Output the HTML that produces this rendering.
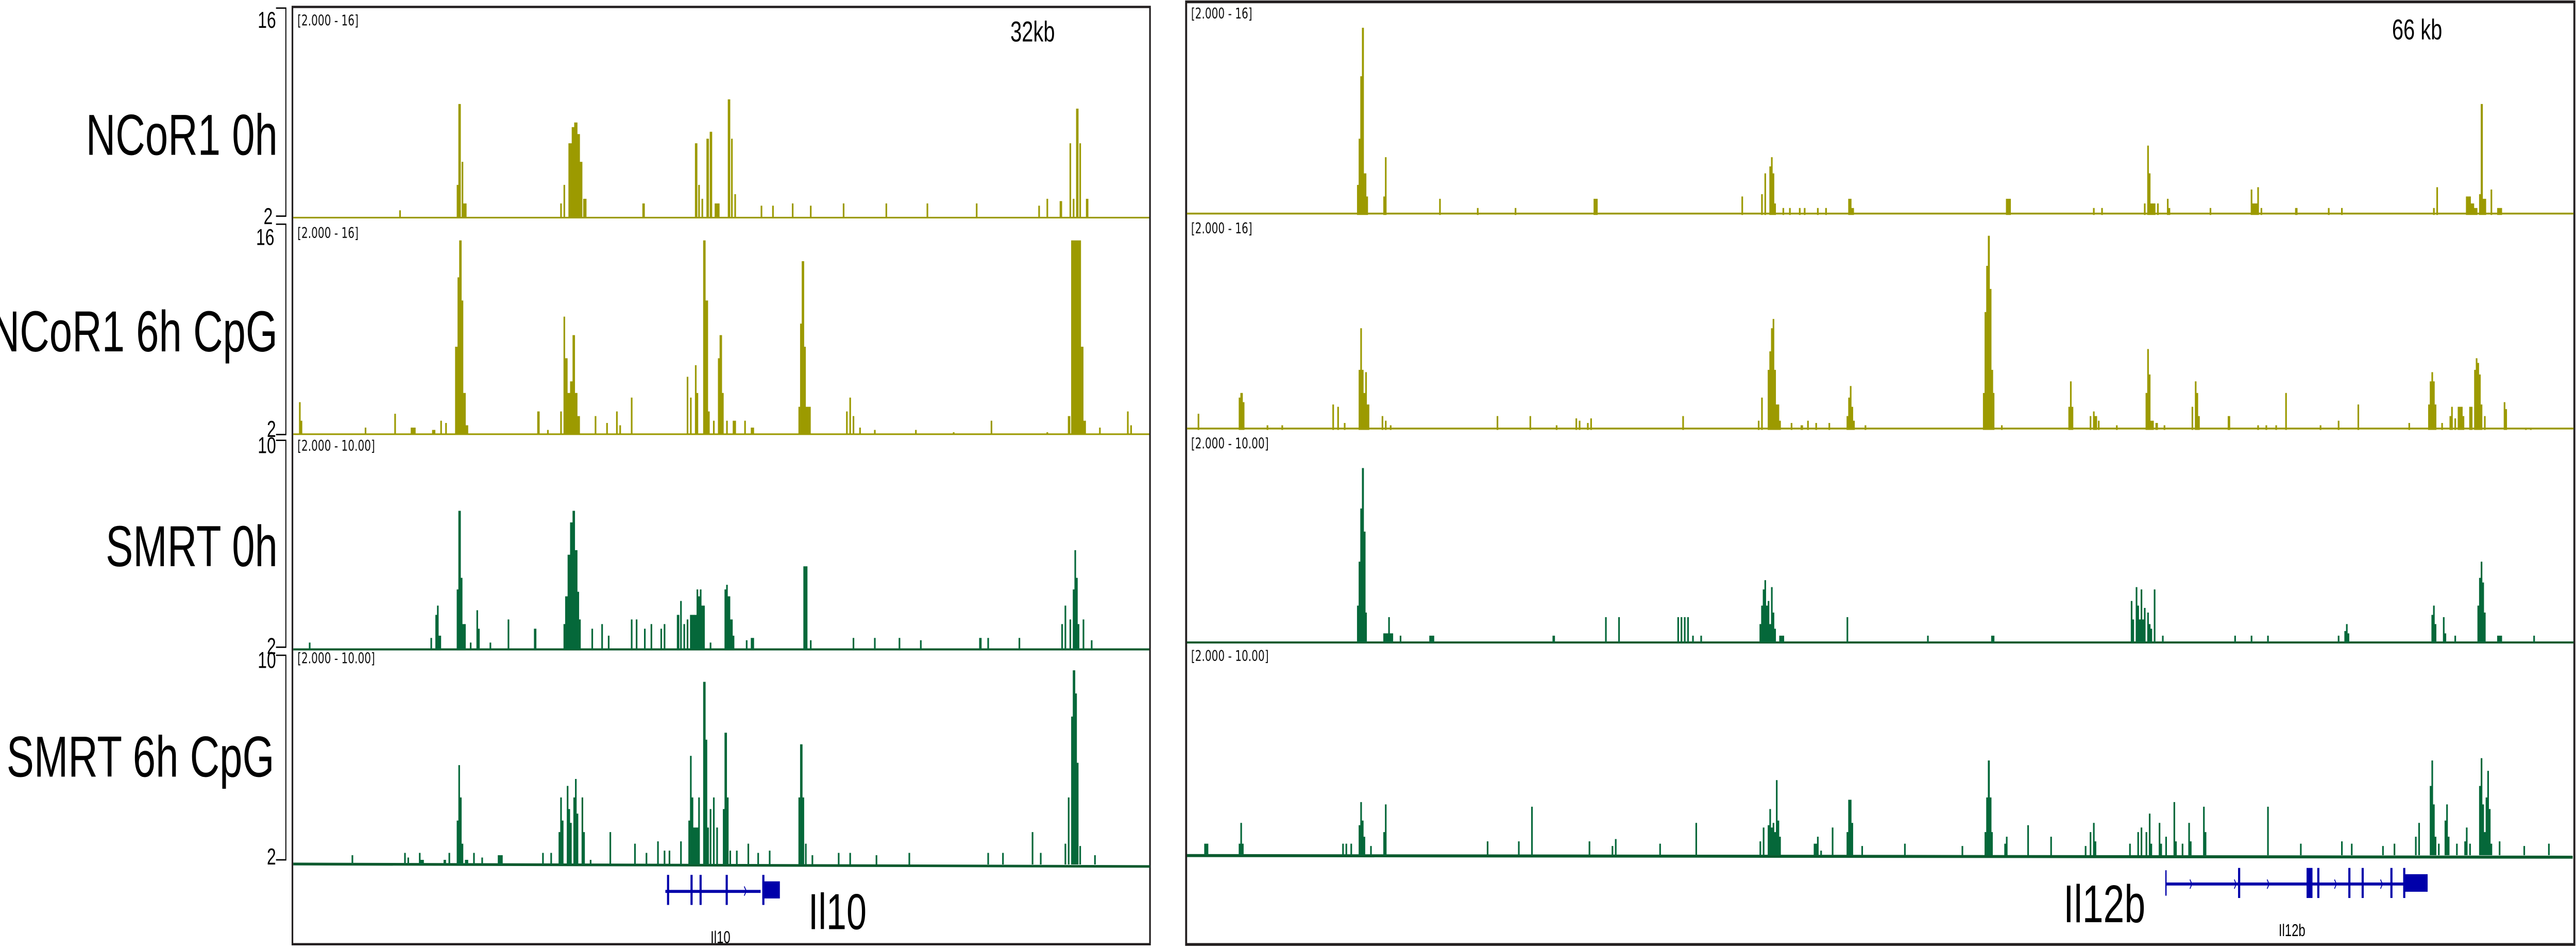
<!DOCTYPE html>
<html><head><meta charset="utf-8">
<style>
html,body{margin:0;padding:0;background:#fff;width:100%;height:100%;overflow:hidden;}
svg{display:block;position:fixed;left:0;top:0;width:100vw;height:100vh;}
text{font-family:"Liberation Sans",sans-serif;}
.r{font-family:"DejaVu Sans",sans-serif;font-size:6.3px;fill:#111;}
</style></head><body>
<svg viewBox="0 0 1568 411" preserveAspectRatio="none" xmlns="http://www.w3.org/2000/svg">
<rect width="1568" height="411" fill="#fff"/>
<g font-size="25" text-anchor="end" fill="#000">
<text x="169" y="67">NCoR1 0h</text>
<text x="169" y="152">NCoR1 6h CpG</text>
<text x="169" y="245">SMRT 0h</text>
<text x="167" y="336">SMRT 6h CpG</text>
</g>
<g font-size="10" text-anchor="end" fill="#000">
<text x="168" y="12">16</text><text x="166" y="97">2</text>
<text x="167" y="106">16</text><text x="168" y="189">2</text>
<text x="168" y="196">10</text><text x="168" y="283">2</text>
<text x="168" y="289">10</text><text x="168" y="374">2</text>
</g>
<g fill="none" stroke="#000" stroke-width="0.6">
<path d="M168 3.5H174V93.5H168"/>
<path d="M168 97H174V188H168"/>
<path d="M168 190.5H174V280H168"/>
<path d="M168 283.5H174V372H168"/>
</g>
<rect x="178" y="3" width="522" height="405.5" fill="none" stroke="#231f20" stroke-width="1"/>
<rect x="722" y="0.8" width="845" height="407.8" fill="none" stroke="#231f20" stroke-width="1.2"/>
<text class="r" x="181" y="11">[2.000 - 16]</text>
<text class="r" x="181" y="103">[2.000 - 16]</text>
<text class="r" x="181" y="195">[2.000 - 10.00]</text>
<text class="r" x="181" y="287">[2.000 - 10.00]</text>
<text class="r" x="725" y="8">[2.000 - 16]</text>
<text class="r" x="725" y="101">[2.000 - 16]</text>
<text class="r" x="725" y="194">[2.000 - 10.00]</text>
<text class="r" x="725" y="286">[2.000 - 10.00]</text>
<text x="615" y="18" font-size="12.5">32kb</text>
<text x="1456" y="17" font-size="12.5">66 kb</text>

<g fill="#9c9a00">
<rect x="178.5" y="93.8" width="521" height="0.7"/>
<path d="M279 94V45h1.5V94ZM278 94V80h1V94ZM281 94V70h1V94ZM282 94V88h2V94Z
M346 94V62h2V94ZM348 94V55h1.5V94ZM349.5 94V53h2V94ZM351.5 94V58h1.5V94ZM353 94V70h1.5V94ZM355 94V86h2V94ZM343 94V80h1V94ZM341 94V88h1V94Z
M423 94V62h1.5V94ZM425 94V80h1V94ZM430 94V60h1.5V94ZM432 94V57h1.5V94ZM435 94V88h3V94ZM443 94V43h1.5V94ZM445 94V60h1V94ZM447 94V84h1V94ZM427 94V86h1V94Z
M243 94V91h1V94ZM391 94V88h1.5V94ZM463 94V89h1V94ZM470 94V89h1V94ZM482 94V88h1V94ZM493 94V89h1V94ZM513 94V88h1V94ZM539 94V88h1V94ZM564 94V88h1V94ZM594 94V88h1V94ZM632 94V89h1V94ZM637 94V86h1V94ZM645 94V87h1.5V94ZM651 94V62h1V94ZM655 94V47h1.5V94ZM657 94V62h1V94ZM653 94V86h1V94ZM661 94V86h1.5V94Z"/>
<rect x="178.5" y="187.5" width="521" height="0.7"/>
<path d="M182 188V174h1V188ZM183 188V182h1V188ZM222 188V185h1V188ZM240 188V179h1V188ZM250 188V185h3V188ZM263 188V186h2V188ZM268 188V182h1V188ZM271 188V183h1V188Z
M277 188V150h1.5V188ZM278.5 188V120h1V188ZM279.5 188V104h1.5V188ZM281 188V130h1V188ZM282 188V170h1.5V188ZM283.5 188V184h1.5V188Z
M343 188V137h1V188ZM344 188V155h1.5V188ZM345.5 188V170h1.5V188ZM347 188V165h1.5V188ZM348.5 188V145h1.5V188ZM350 188V170h1.5V188ZM351.5 188V180h1.5V188ZM341 188V178h1V188ZM327 188V178h1.5V188ZM333 188V186h1V188ZM362 188V180h1V188ZM369 188V183h1V188ZM375 188V178h1V188ZM377 188V184h1V188ZM384 188V172h1V188Z
M418 188V163h1V188ZM420 188V172h1V188ZM423 188V158h1V188ZM424 188V170h1V188ZM428 188V104h1.5V188ZM429.5 188V130h1.5V188ZM431 188V178h1V188ZM434 188V182h1V188ZM437 188V155h1V188ZM438 188V145h1.5V188ZM439.5 188V170h1V188ZM442 188V182h1V188ZM446 188V182h2V188ZM453 188V182h1V188ZM457 188V185h2V188Z
M486 188V176h1V188ZM487 188V140h1V188ZM488 188V113h1.5V188ZM489.5 188V150h1V188ZM490.5 188V176h3V188ZM515 188V178h1V188ZM517 188V172h1V188ZM519 188V180h1V188ZM523 188V185h1V188ZM532 188V186h1V188ZM557 188V186h1V188ZM580 188V187h1V188ZM603 188V182h1V188ZM637 188V187h1V188ZM650 188V180h1.5V188ZM652 188V104h6V188ZM658 188V150h1.5V188ZM659.5 188V182h1.5V188ZM669 188V185h1V188ZM686 188V178h1V188ZM688 188V184h1V188Z"/>
</g>
<g fill="#05683a">
<rect x="178.5" y="280.5" width="521" height="0.9" fill="#0b5a2e"/>
<path d="M188 281V278h1V281ZM262 281V276h1V281ZM265 281V266h1V281ZM266 281V262h1V281ZM267 281V275h1.5V281Z
M278 281V255h1V281ZM279 281V221h1.5V281ZM280.5 281V250h1V281ZM281.5 281V270h2V281ZM286 281V278h1V281ZM290 281V264h1V281ZM291 281V272h1V281ZM298 281V278h1V281ZM309 281V268h1V281ZM325 281V272h1.5V281Z
M343 281V270h1V281ZM344 281V258h1.5V281ZM345.5 281V240h1.5V281ZM347 281V226h1.5V281ZM348.5 281V221h1.5V281ZM350 281V238h1.5V281ZM351.5 281V256h1V281ZM352.5 281V268h1V281ZM360 281V272h1V281ZM366 281V270h1V281ZM370 281V275h1V281ZM384 281V268h1V281ZM387 281V268h1V281ZM392 281V272h1V281ZM396 281V270h1V281ZM402 281V272h1V281ZM404 281V270h1V281Z
M412 281V266h1.5V281ZM414 281V260h1V281ZM416 281V270h1V281ZM418 281V268h1V281ZM420 281V266h4V281ZM424 281V255h1V281ZM425 281V258h1V281ZM426 281V255h1V281ZM427 281V262h2V281ZM432 281V278h1V281ZM441 281V255h1V281ZM442 281V253h1V281ZM443 281V258h1.5V281ZM444.5 281V268h1.5V281ZM446 281V275h1V281ZM454 281V277h1V281ZM457 281V276h2V281Z
M489 281V245h2.5V281ZM493 281V277h1V281ZM519 281V276h1V281ZM532 281V276h1V281ZM547 281V276h1V281ZM560 281V277h1V281ZM596 281V276h1.5V281ZM601 281V276h1V281ZM620 281V276h1V281ZM646 281V270h1V281ZM648 281V262h1V281ZM651 281V268h1V281ZM653 281V255h1V281ZM654 281V238h1V281ZM655 281V250h1V281ZM656 281V270h1V281ZM659 281V268h1V281ZM664 281V277h1V281Z"/>
<path d="M178.5 373.2L700 374.3V375.4L178.5 374.4Z" fill="#0b5a2e"/>
<path d="M214 374V370h1V374ZM246 374V369h1V374ZM248 374V371h1V374ZM255 374V369h1V374ZM256 374V372h2V374ZM270 374V372h1.5V374ZM273 374V369h1V374Z
M278 374V355h1V374ZM279 374V331h1V374ZM280 374V345h1V374ZM281 374V365h1V374ZM283 374V372h2V374ZM288 374V369h1V374ZM293 374V371h1V374ZM303 374V370h3V374ZM330 374V369h1V374ZM335 374V369h1V374Z
M340 374V360h1V374ZM341 374V345h1V374ZM342 374V355h1V374ZM345 374V340h1V374ZM346 374V350h1V374ZM347 374V356h1V374ZM349 374V345h1V374ZM350 374V337h1V374ZM351 374V352h1V374ZM354 374V345h1V374ZM355 374V360h1V374ZM359 374V372h1V374ZM371 374V360h1V374ZM386 374V365h1V374ZM393 374V369h1V374ZM400 374V364h1V374ZM404 374V368h1V374ZM407 374V368h1V374Z
M414 374V364h1V374ZM419 374V355h1V374ZM420 374V327h1V374ZM421 374V345h1V374ZM422 374V358h4V374ZM425 374V345h1V374ZM428 374V295h1.5V374ZM429.5 374V320h1V374ZM430.5 374V358h1V374ZM432 374V350h1V374ZM434 374V345h1V374ZM436 374V358h1V374ZM440 374V350h1V374ZM441 374V317h1.5V374ZM442.5 374V345h1V374ZM444 374V368h1V374ZM448 374V368h1V374ZM455 374V365h1V374ZM461 374V369h1V374ZM468 374V368h1V374Z
M486 374V345h1V374ZM487 374V322h1.5V374ZM488.5 374V345h1V374ZM490 374V365h1V374ZM494 374V370h1V374ZM510 374V369h1V374ZM517 374V369h1V374ZM533 374V370h1V374ZM553 374V369h1V374ZM601 374V369h1V374ZM610 374V369h1V374ZM628 374V360h1V374ZM633 374V369h1V374ZM648 374V365h1V374ZM650 374V345h1V374ZM652 374V310h1V374ZM653 374V290h1.5V374ZM654.5 374V300h1V374ZM655.5 374V330h1V374ZM657 374V366h1V374ZM666 374V370h1V374Z"/>
</g>
<g fill="#0000aa">
<rect x="405" y="385" width="58" height="1.3"/>
<rect x="406" y="378.5" width="1.3" height="13"/>
<rect x="420.3" y="378.5" width="1.3" height="13"/>
<rect x="425.8" y="378.5" width="1.3" height="13"/>
<rect x="441.7" y="378.5" width="1.3" height="13"/>
<rect x="464" y="378.5" width="1.3" height="13"/>
<rect x="464" y="381.3" width="10.7" height="7.4"/>
<path d="M453 383.5l1.3 2-1.3 2" fill="none" stroke="#0000aa" stroke-width="0.5"/>
</g>
<text x="492" y="402" font-size="22">Il10</text>
<text x="432.5" y="408" font-size="7.5">Il10</text>

<g fill="#9c9a00">
<rect x="722.5" y="92" width="844" height="0.8"/>
<path d="M826 93V80h1V93ZM827 93V60h1V93ZM828 93V33h1V93ZM829 93V12h1.2V93ZM830.2 93V75h1.5V93ZM831.7 93V85h1V93ZM842 93V85h1V93ZM843 93V68h1V93ZM876 93V86h1V93ZM899 93V90h1V93ZM922 93V90h1V93ZM970 93V86h2.5V93Z
M1060 93V85h1V93ZM1072 93V84h1V93ZM1074 93V75h1V93ZM1077 93V72h1V93ZM1078 93V68h1V93ZM1079 93V75h1V93ZM1080 93V88h1V93ZM1085 93V90h1V93ZM1089 93V90h1V93ZM1095 93V90h1V93ZM1098 93V90h1V93ZM1106 93V90h1V93ZM1111 93V90h1V93ZM1125 93V86h2V93ZM1127 93V90h1.5V93ZM1221 93V86h3V93Z
M1274 93V90h1V93ZM1279 93V90h1V93ZM1305 93V88h1V93ZM1307 93V63h1V93ZM1308 93V75h1V93ZM1309 93V88h3V93ZM1313 93V88h1V93ZM1319 93V86h1V93ZM1320 93V90h1V93ZM1345 93V90h1V93ZM1370 93V82h1V93ZM1371 93V88h3V93ZM1374 93V81h1V93ZM1376 93V90h1V93ZM1397 93V90h1.5V93ZM1417 93V90h1V93ZM1425 93V90h1V93ZM1481 93V90h1V93ZM1483 93V81h1V93ZM1501 93V85h3V93ZM1504 93V88h2V93ZM1506 93V90h2V93ZM1509 93V84h1V93ZM1510 93V45h1.3V93ZM1511.3 93V86h2V93ZM1516 93V82h1V93ZM1520 93V90h3V93Z"/>
<rect x="722.5" y="185" width="844" height="0.8"/>
<path d="M729 186V179h1V186ZM754 186V172h1V186ZM755 186V170h1.5V186ZM756.5 186V174h1V186ZM771 186V184h1V186ZM780 186V184h1V186ZM811 186V175h1V186ZM814 186V176h1V186ZM818 186V183h1V186ZM827 186V160h1V186ZM828 186V142h1V186ZM829 186V160h1V186ZM830 186V170h1V186ZM831 186V161h1V186ZM832 186V175h1.5V186ZM841 186V180h1V186ZM843 186V182h1V186ZM846 186V184h1V186ZM911 186V180h1V186ZM931 186V180h1V186ZM947 186V184h1V186ZM959 186V181h1V186ZM961 186V182h1V186ZM966 186V183h1V186ZM968 186V181h1V186Z
M1024 186V180h1V186ZM1070 186V182h1V186ZM1072 186V172h1V186ZM1076 186V160h1V186ZM1077 186V152h1V186ZM1078 186V142h1V186ZM1079 186V138h1V186ZM1080 186V160h1V186ZM1081 186V175h2V186ZM1083 186V182h1V186ZM1090 186V183h1V186ZM1096 186V184h1.5V186ZM1100 186V182h1V186ZM1105 186V183h1V186ZM1113 186V183h1V186ZM1124 186V180h1V186ZM1125 186V172h1V186ZM1126 186V167h1V186ZM1127 186V176h1V186ZM1128 186V182h1V186ZM1135 186V184h1V186Z
M1207 186V170h1V186ZM1208 186V135h1V186ZM1209 186V115h1V186ZM1210 186V102h1.2V186ZM1211.2 186V125h1V186ZM1212.2 186V160h1V186ZM1213 186V170h1V186ZM1218 186V184h1V186ZM1259 186V176h1V186ZM1260 186V165h1V186ZM1261 186V176h1V186ZM1272 186V180h1V186ZM1274 186V178h1V186ZM1275 186V180h1.5V186ZM1277 186V182h1V186ZM1288 186V184h1V186Z
M1306 186V170h1V186ZM1307 186V151h1V186ZM1308 186V162h1V186ZM1309 186V182h2V186ZM1312 186V183h1.5V186ZM1317 186V184h1V186ZM1334 186V176h1V186ZM1336 186V165h1V186ZM1337 186V170h1V186ZM1338 186V180h1V186ZM1356 186V180h1.5V186ZM1374 186V184h1V186ZM1379 186V184h1V186ZM1385 186V184h1V186ZM1391 186V170h1V186ZM1412 186V184h1V186ZM1423 186V182h1V186ZM1435 186V175h1V186Z
M1466 186V183h1V186ZM1478 186V175h1V186ZM1479 186V165h1V186ZM1480 186V161h1V186ZM1481 186V165h1V186ZM1482 186V175h1V186ZM1486 186V183h1V186ZM1491 186V180h1V186ZM1492 186V176h1V186ZM1494 186V181h1V186ZM1496 186V176h1V186ZM1497 186V176h2V186ZM1499 186V180h1V186ZM1503 186V176h2V186ZM1506 186V160h1V186ZM1507 186V155h1V186ZM1508 186V157h1V186ZM1509 186V162h1V186ZM1510 186V175h1V186ZM1512 186V180h1V186ZM1524 186V174h1V186ZM1525 186V177h1V186ZM1537 186V185h1V186ZM1540 186V185h1V186Z"/>
</g>
<g fill="#05683a">
<rect x="722.5" y="277.5" width="844" height="0.9" fill="#0b5a2e"/>
<path d="M826 278V262h1V278ZM827 278V243h1V278ZM828 278V220h1V278ZM829 278V202.5h1.2V278ZM830.2 278V230h1V278ZM831 278V265h1V278ZM842 278V274h3V278ZM845 278V267h1V278ZM846 278V274h2V278ZM852 278V275h1V278ZM870 278V275h3V278ZM945 278V275h1.5V278ZM977 278V267h1V278ZM985 278V267h1V278ZM1021 278V267h1V278ZM1023 278V267h1V278ZM1025 278V267h1V278ZM1027 278V267h1V278ZM1030 278V275h1V278ZM1035 278V275h1V278Z
M1071 278V270h1V278ZM1072 278V262h1V278ZM1073 278V255h1V278ZM1074 278V251h1V278ZM1075 278V262h1V278ZM1076 278V260h1V278ZM1077 278V270h1V278ZM1078 278V254h1V278ZM1079 278V265h1V278ZM1080 278V272h1V278ZM1083 278V275h3V278ZM1124 278V267h1V278ZM1173 278V275h1V278ZM1212 278V275h2V278Z
M1297 278V260h1V278ZM1298 278V268h1V278ZM1300 278V254h1V278ZM1301 278V262h1V278ZM1302 278V268h1V278ZM1303 278V255h1V278ZM1304 278V268h1V278ZM1305 278V263h1V278ZM1307 278V265h1V278ZM1308 278V270h1V278ZM1309 278V272h1V278ZM1311 278V255h1V278ZM1316 278V275h1V278ZM1360 278V275h1V278ZM1370 278V275h1V278ZM1380 278V275h1V278ZM1423 278V275h1V278ZM1427 278V273h1V278ZM1428 278V270h1V278ZM1429 278V274h1V278ZM1480 278V266h1V278ZM1481 278V262h1V278ZM1482 278V270h1V278ZM1487 278V267h1V278ZM1488 278V274h1V278ZM1494 278V275h1V278ZM1508 278V262h1V278ZM1509 278V250h1V278ZM1510 278V243h1V278ZM1511 278V252h1V278ZM1512 278V265h1V278ZM1520 278V275h3V278ZM1542 278V275h1V278Z"/>
<path d="M722.5 369.5L1566 370.2V371.5L722.5 370.8Z" fill="#0b5a2e"/>
<path d="M733 370V365h2.5V370ZM754 370V365h1V370ZM755 370V356h1V370ZM756 370V365h1V370ZM817 370V365h1V370ZM819 370V365h1V370ZM822 370V365h1V370ZM827 370V357h1V370ZM828 370V347h1V370ZM829 370V355h1V370ZM830 370V362h1V370ZM834 370V366h1V370ZM842 370V360h1V370ZM843 370V348h1V370ZM905 370V364h1V370ZM924 370V364h1V370ZM932 370V349h1V370ZM967 370V364h1V370ZM981 370V366h1V370ZM983 370V363h1V370ZM1010 370V365h1V370ZM1032 370V356h1V370Z
M1071 370V364h1V370ZM1073 370V358h1V370ZM1076 370V357h1V370ZM1077 370V350h1V370ZM1078 370V358h1V370ZM1079 370V356h1V370ZM1080 370V360h1V370ZM1081 370V337.5h1V370ZM1082 370V355h1V370ZM1083 370V362h1V370ZM1104 370V365h2V370ZM1106 370V362h1V370ZM1108 370V368h1V370ZM1115 370V358h1V370ZM1124 370V360h1V370ZM1125 370V346h1V370ZM1126 370V346h1V370ZM1127 370V356h1V370ZM1133 370V366h1V370ZM1159 370V365h1V370ZM1194 370V366h1V370Z
M1208 370V360h1V370ZM1209 370V345h1V370ZM1210 370V329h1.2V370ZM1211.2 370V345h1V370ZM1212 370V360h1V370ZM1220 370V365h1V370ZM1221 370V362h1V370ZM1234 370V357h1V370ZM1248 370V362h1V370ZM1269 370V366h1V370ZM1272 370V360h1V370ZM1274 370V356h1V370ZM1275 370V364h1V370ZM1296 370V365h1V370ZM1301 370V360h1V370ZM1303 370V358h1V370ZM1306 370V360h1V370ZM1308 370V352h1V370ZM1309 370V365h1V370ZM1314 370V356h1V370ZM1315 370V365h1V370ZM1318 370V362h1V370ZM1323 370V347h1V370ZM1324 370V364h1V370ZM1328 370V365h1V370ZM1332 370V356h1V370ZM1333 370V364h1V370ZM1341 370V349h1V370ZM1342 370V360h1V370ZM1380 370V349h1V370ZM1400 370V365h1V370ZM1425 370V364h1V370ZM1431 370V365h1V370ZM1450 370V366h1V370ZM1457 370V365h1V370Z
M1470 370V362h1V370ZM1472 370V356h1V370ZM1479 370V340h1V370ZM1480 370V329h1V370ZM1481 370V348h1V370ZM1482 370V362h1V370ZM1484 370V365h1V370ZM1488 370V355h1V370ZM1489 370V348h1V370ZM1490 370V362h1V370ZM1495 370V365h1V370ZM1500 370V364h1V370ZM1501 370V358h1V370ZM1503 370V365h1V370ZM1509 370V340h1V370ZM1510 370V328h1V370ZM1511 370V348h1V370ZM1512 370V360h1V370ZM1513 370V345h1V370ZM1514 370V333.5h1V370ZM1515 370V350h1V370ZM1516 370V365h1V370ZM1521 370V364h1V370ZM1536 370V366h1V370ZM1551 370V365h1V370Z"/>
</g>
<g fill="#0000aa">
<rect x="1318.5" y="381.8" width="145" height="1.3"/>
<rect x="1318" y="376.5" width="0.8" height="11"/>
<rect x="1362.3" y="375.5" width="1.3" height="13"/>
<rect x="1404" y="375.5" width="3.6" height="13"/>
<rect x="1410.5" y="375.5" width="1.3" height="13"/>
<rect x="1429.4" y="375.5" width="1.3" height="13"/>
<rect x="1437.5" y="375.5" width="1.3" height="13"/>
<rect x="1455" y="375.5" width="1.3" height="13"/>
<rect x="1462.8" y="375.5" width="1.3" height="13"/>
<rect x="1463" y="378.2" width="14.7" height="7.6"/>
<path d="M1333 380.5l1.2 2-1.2 2M1380 380.5l1.2 2-1.2 2M1360 380.5l1.2 2-1.2 2M1421 380.5l1.2 2-1.2 2M1449 380.5l1.2 2-1.2 2" fill="none" stroke="#0000aa" stroke-width="0.5"/>
</g>
<text x="1256" y="399" font-size="23">Il12b</text>
<text x="1387" y="405" font-size="7.5">Il12b</text>
</svg>
</body></html>
